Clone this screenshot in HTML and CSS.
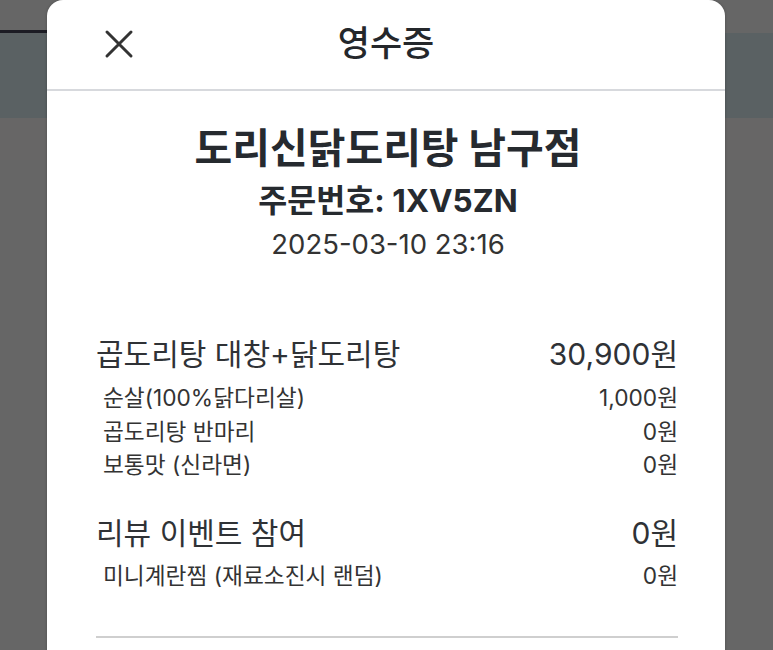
FILE: index.html
```html
<!DOCTYPE html>
<html lang="ko">
<head>
<meta charset="utf-8">
<title>영수증</title>
<link rel="stylesheet" href="styles.css">
</head>
<body>
<div class="page">
  <div class="band band-top"></div>
  <div class="band band-rule"></div>
  <div class="band band-nav"></div>
  <div class="band band-sub"></div>
  <div class="band band-rest"></div>
</div>
<div class="modal">
  <header class="modal-header">
    <button class="close" aria-label="닫기">
      <svg width="30" height="30" viewBox="0 0 30 30"><path d="M3 3 L27 27 M27 3 L3 27" stroke="#333" stroke-width="3" stroke-linecap="round" fill="none"/></svg>
    </button>
    <h1 class="title">영수증</h1>
  </header>
  <section class="modal-body">
    <div class="store">도리신닭도리탕 남구점</div>
    <div class="order-no">주문번호: 1XV5ZN</div>
    <div class="date">2025-03-10 23:16</div>

    <div class="group group-first">
      <div class="row main"><span>곱도리탕 대창+닭도리탕</span><span>30,900원</span></div>
      <div class="row opt"><span>순살(100%닭다리살)</span><span>1,000원</span></div>
      <div class="row opt"><span>곱도리탕 반마리</span><span>0원</span></div>
      <div class="row opt"><span>보통맛 (신라면)</span><span>0원</span></div>
    </div>

    <div class="group">
      <div class="row main"><span>리뷰 이벤트 참여</span><span>0원</span></div>
      <div class="row opt"><span>미니계란찜 (재료소진시 랜덤)</span><span>0원</span></div>
    </div>

    <hr class="divider">
  </section>
</div>
</body>
</html>
```

FILE: styles.css
```css
html, body {
  margin: 0;
  padding: 0;
}
body {
  width: 773px;
  height: 650px;
  overflow: hidden;
  background: #666666;
  font-family: "Inter", "Noto Sans CJK KR", sans-serif;
  position: relative;
}
.page {
  display: flex;
  flex-direction: column;
}
.band-top { height: 30px; background: #666666; }
.band-rule { height: 3px; width: 60px; background: #1c1c24; }
.band-nav { height: 85px; background: #5a6163; }
.band-sub { height: 42px; background: #676666; }
.band-rest { height: 490px; background: #666666; }

.modal {
  position: absolute;
  left: 47px;
  top: 0;
  width: 678px;
  height: 680px;
  background: #ffffff;
  border-radius: 16px 16px 0 0;
  box-shadow: 0 0 3px rgba(0,0,0,0.25);
}
.modal-header {
  position: relative;
  height: 89px;
  border-bottom: 2px solid #d7d9dd;
  display: flex;
  align-items: center;
  justify-content: center;
}
.close {
  position: absolute;
  left: 57px;
  top: 29px;
  width: 30px;
  height: 30px;
  padding: 0;
  border: 0;
  background: none;
  display: flex;
}
.title {
  margin: 0;
  font-size: 35px;
  font-weight: 500;
  color: #24272b;
  line-height: 44px;
  margin-top: -4px;
}
.modal-body {
  padding: 33px 47px 0 49px;
  color: #333;
}
.store {
  text-align: center;
  font-size: 41px;
  font-weight: 700;
  line-height: 48px;
  color: #262a2f;
  margin-left: 2px;
}
.order-no {
  text-align: center;
  font-size: 31.5px;
  font-weight: 700;
  line-height: 34px;
  margin-top: 12px;
  color: #262a2f;
  margin-left: 2px;
}
.date {
  text-align: center;
  font-size: 27.5px;
  font-weight: 400;
  line-height: 34px;
  margin-top: 9px;
  color: #333;
  margin-left: 2px;
}
.group { margin-top: 31px; }
.group-first { margin-top: 73px; }
.row {
  display: flex;
  justify-content: space-between;
  align-items: center;
}
.main {
  font-size: 30px;
  line-height: 40px;
  margin-bottom: 6px;
  color: #2f3236;
}
.opt {
  font-size: 22.7px;
  line-height: 33.5px;
  padding-left: 7px;
  color: #333;
}
.group-first .main { margin-bottom: 7px; }
.divider {
  margin: 44px 0 0 0;
  border: 0;
  height: 2px;
  background: #cfcfcf;
}
```
